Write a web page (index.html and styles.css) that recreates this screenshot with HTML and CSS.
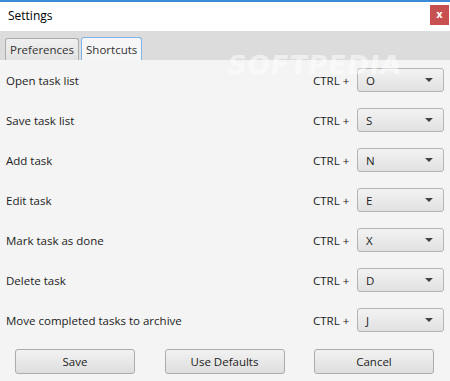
FILE: index.html
```html
<!DOCTYPE html>
<html>
<head>
  <meta charset="UTF-8">
  <title>Settings</title>
  <link rel="stylesheet" href="styles.css">
</head>
<body>
  <div class="window">
    <div class="titlebar">
      <span class="title">Settings</span>
      <span class="close">x</span>
    </div>

    <div class="tabs">
      <div class="tab">Preferences</div>
      <div class="tab active">Shortcuts</div>
    </div>

    <div class="content">
      <div class="row">
        <span class="label">Open task list</span>
        <span class="ctrl">CTRL +</span>
        <div class="combo"><span>O</span><i class="arrow"></i></div>
      </div>
      <div class="row">
        <span class="label">Save task list</span>
        <span class="ctrl">CTRL +</span>
        <div class="combo"><span>S</span><i class="arrow"></i></div>
      </div>
      <div class="row">
        <span class="label">Add task</span>
        <span class="ctrl">CTRL +</span>
        <div class="combo"><span>N</span><i class="arrow"></i></div>
      </div>
      <div class="row">
        <span class="label">Edit task</span>
        <span class="ctrl">CTRL +</span>
        <div class="combo"><span>E</span><i class="arrow"></i></div>
      </div>
      <div class="row">
        <span class="label">Mark task as done</span>
        <span class="ctrl">CTRL +</span>
        <div class="combo"><span>X</span><i class="arrow"></i></div>
      </div>
      <div class="row">
        <span class="label">Delete task</span>
        <span class="ctrl">CTRL +</span>
        <div class="combo"><span>D</span><i class="arrow"></i></div>
      </div>
      <div class="row">
        <span class="label">Move completed tasks to archive</span>
        <span class="ctrl">CTRL +</span>
        <div class="combo"><span>J</span><i class="arrow"></i></div>
      </div>

      <div class="button-container">
        <button class="action-button">Save</button>
        <button class="action-button">Use Defaults</button>
        <button class="action-button">Cancel</button>
      </div>
    </div>

    <div class="watermark">SOFTPEDIA</div>
  </div>
</body>
</html>
```

FILE: styles.css
```css
body {
    margin: 0;
    font-family: 'Open Sans', 'Noto Sans', sans-serif;
    font-size: 11.5px;
    color: #222;
    background: #f4f4f4;
}
.window {
    position: relative;
    width: 450px;
    height: 381px;
    overflow: hidden;
    background: #f4f4f4;
}
.titlebar {
    height: 29px;
    background: #fff;
    border-top: 2px solid #3d8ad6;
    display: flex;
    align-items: center;
    justify-content: space-between;
    padding-left: 8px;
}
.title {
    font-size: 12px;
    color: #000;
    margin-top: -2px;
}
.close {
    width: 19px;
    height: 20px;
    margin-right: 1px;
    margin-top: -4px;
    background: #c75050;
    color: #fff;
    font-family: 'DejaVu Sans', sans-serif;
    font-weight: bold;
    font-size: 10px;
    display: flex;
    align-items: center;
    justify-content: center;
}
.tabs {
    height: 29px;
    background: #dcdcdc;
    display: flex;
    align-items: flex-end;
    padding-left: 5px;
    gap: 2px;
}
.tab {
    height: 21px;
    padding: 0 4px;
    border: 1px solid #acacac;
    border-bottom: none;
    border-radius: 3px 3px 0 0;
    background: linear-gradient(#f0f0f0, #e2e2e2);
    display: flex;
    align-items: center;
    color: #333;
}
.tab.active {
    height: 22px;
    border-color: #7eb4ea;
    background: #f6f6f6;
}
.content {
    padding: 8px 6px 0 6px;
}
.row {
    display: flex;
    align-items: center;
    height: 24px;
    margin-bottom: 16px;
}
.label {
    flex: 1;
    color: #222;
    padding-top: 1px;
}
.ctrl {
    width: 44px;
    color: #222;
    padding-top: 1px;
}
.combo {
    width: 77px;
    height: 22px;
    border: 1px solid #b4b4b4;
    border-radius: 3px;
    background: linear-gradient(#f3f3f3, #e1e1e1);
    display: flex;
    align-items: center;
    justify-content: space-between;
    padding: 0 0 0 8px;
}
.combo span {
    color: #222;
}
.arrow {
    width: 0;
    height: 0;
    border-left: 4px solid transparent;
    border-right: 4px solid transparent;
    border-top: 4px solid #444;
    margin-right: 10px;
}
.button-container {
    display: flex;
    justify-content: space-between;
    padding: 1px 10px 0 9px;
}
.action-button {
    width: 120px;
    height: 25px;
    border: 1px solid #acacac;
    border-radius: 3px;
    background: linear-gradient(#f2f2f2, #dedede);
    font-family: 'Open Sans', 'Noto Sans', sans-serif;
    font-size: 11.5px;
    color: #222;
    padding: 0;
}
.watermark {
    position: absolute;
    left: 228px;
    top: 50px;
    font-family: 'DejaVu Sans', sans-serif;
    font-weight: bold;
    font-size: 26px;
    letter-spacing: 1px;
    color: rgba(255, 255, 255, 0.55);
    transform: skewX(-8deg);
    pointer-events: none;
}
```
